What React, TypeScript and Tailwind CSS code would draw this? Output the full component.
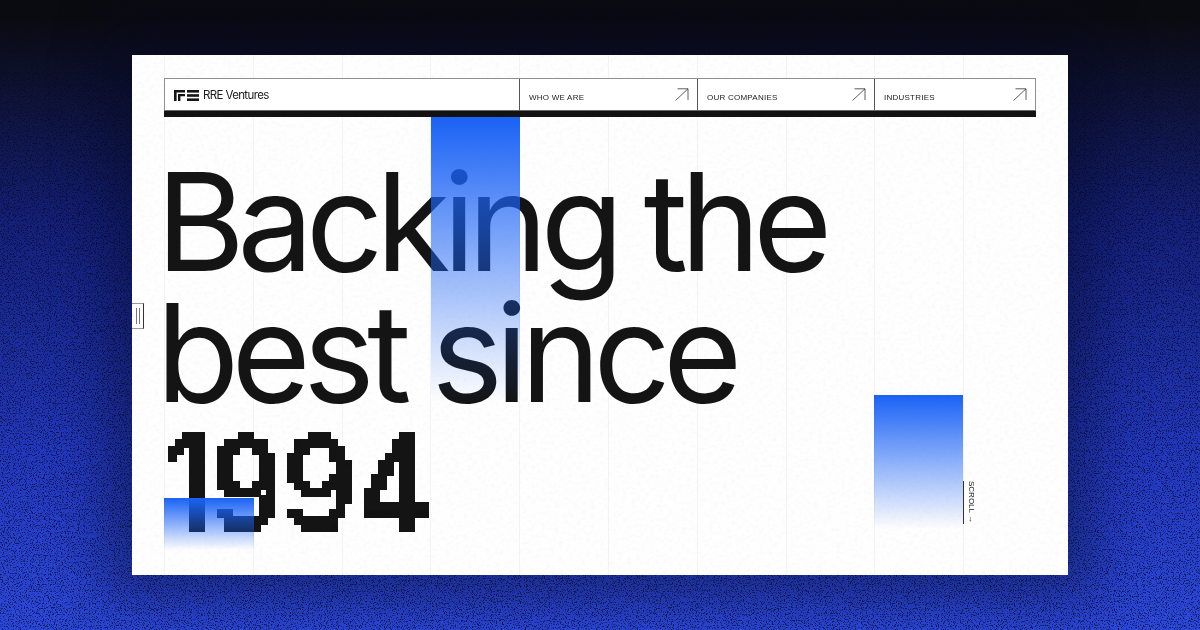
import React from 'react';

const columns = [1, 2, 3, 4, 5, 6, 7, 8, 9, 10];

const navItems = [
  { label: 'WHO WE ARE', width: 'w-[178px]' },
  { label: 'OUR COMPANIES', width: 'w-[177px]' },
  { label: 'INDUSTRIES', width: 'flex-1' },
];

function NavArrow() {
  return (
    <svg width="14" height="13" viewBox="0 0 14 13" fill="none" stroke="#333" strokeWidth="0.8" className="mt-[9px] shrink-0">
      <path d="M0.5 12.5 L13 0.8 M2.5 0.8 H13 V12" />
    </svg>
  );
}

function Logo() {
  return (
    <svg width="25" height="11" viewBox="0 0 25 11" fill="#151515">
      <path d="M0 0H11V2.4H2.6V11H0Z" />
      <path d="M4 4H11V6.2H6.4V11H4Z" />
      <rect x="13" y="0" width="12" height="2.6" />
      <rect x="13" y="4.2" width="12" height="2.6" />
      <rect x="13" y="8.4" width="12" height="2.6" />
    </svg>
  );
}

export default function App() {
  return (
    <div className="relative w-[1200px] h-[630px] overflow-hidden bg-[linear-gradient(180deg,#0b0b0e_3%,#14207a_35%,#2238c0_72%,#2c48dc_100%)] pt-[55px] font-['Inter',sans-serif]">
      {/* grain over the page background */}
      <svg className="absolute inset-0 w-full h-full opacity-70" aria-hidden="true">
        <filter id="grain" x="0" y="0" width="100%" height="100%" colorInterpolationFilters="sRGB">
          <feTurbulence type="fractalNoise" baseFrequency="0.83" numOctaves="2" seed="7" />
          <feColorMatrix values="0 0 0 0 0.03  0 0 0 0 0.04  0 0 0 0 0.14  6 0 0 0 -3.1" />
        </filter>
        <rect width="100%" height="100%" filter="url(#grain)" />
      </svg>

      {/* turns the year into chunky pixels */}
      <svg className="absolute w-0 h-0" aria-hidden="true">
        <filter id="pixelate" x="0" y="0" width="100%" height="100%" colorInterpolationFilters="sRGB">
          <feFlood x="3" y="3" width="1" height="1" floodColor="#000" />
          <feComposite width="7" height="7" />
          <feTile result="dots" />
          <feComposite in="SourceGraphic" in2="dots" operator="in" />
          <feMorphology operator="dilate" radius="3.5" />
          <feComponentTransfer>
            <feFuncA type="discrete" tableValues="0 1 1" />
          </feComponentTransfer>
        </filter>
        <filter id="ghost" x="0" y="0" width="100%" height="100%">
          <feTurbulence type="fractalNoise" baseFrequency="0.22 0.3" numOctaves="2" seed="9" />
          <feColorMatrix values="0 0 0 0 0  0 0 0 0 0  0 0 0 0 0  0.9 0 0 0 -0.38" />
        </filter>
      </svg>

      <div className="relative mx-auto w-[936px] h-[520px] bg-[#fefefe] px-[32px] pt-[23px] shadow-[0_0_50px_25px_rgba(5,8,30,0.4)]">
        {/* faint texture and column guides */}
        <svg className="absolute inset-0 w-full h-full opacity-[0.05]" aria-hidden="true">
          <rect width="100%" height="100%" filter="url(#ghost)" />
        </svg>
        <div className="absolute inset-y-0 left-[32px] flex w-[888px]">
          {columns.map((c) => (
            <div key={c} className="flex-1 border-l border-[#f3f3f3]" />
          ))}
        </div>

        <header className="relative [will-change:transform]">
          <div className="flex h-[33px] bg-white border border-[#8f8f8f] border-b-[#666] text-[#1a1a1a]">
            <div className="w-[354px] flex items-center gap-[4px] pl-[9px] pt-[2px]">
              <Logo />
              <span className="text-[11.5px] tracking-[-0.055em] font-['Inter',sans-serif]">RRE Ventures</span>
            </div>
            {navItems.map((item) => (
              <div key={item.label} className={`flex justify-between ${item.width} border-l border-[#555] pl-[9px] pr-[8px]`}>
                <span className="pt-[14px] text-[8px] leading-[10px] tracking-[0.03em] font-['Liberation_Sans',sans-serif]">{item.label}</span>
                <NavArrow />
              </div>
            ))}
          </div>
          <div className="h-[6px] bg-[#121212]" />
        </header>

        <h1 className="relative mt-[39px] -ml-[8px] text-[136px] leading-[131px] font-normal tracking-[-0.057em] [word-spacing:-3px] text-[#141414] font-['Inter',sans-serif]">
          <span className="block">Backing the</span>
          <span className="block">best since</span>
          <span className="block ml-[6px] mt-[1px] h-[131px] text-[132px] font-medium tracking-[0] [filter:url(#pixelate)]">
            <span className="inline-block origin-left scale-x-[0.875]">1994</span>
          </span>
        </h1>

        {/* blue fades lie over the headline */}
        <div className="absolute left-[299px] top-[62px] w-[89px] h-[285px] bg-gradient-to-b from-[#1a62f5] to-transparent" />
        <div className="absolute left-[742px] top-[340px] w-[89px] h-[134px] bg-gradient-to-b from-[#1a62f5] to-transparent" />
        <div className="absolute left-[32px] top-[443px] w-[90px] h-[52px] bg-gradient-to-b from-[#1a62f5] to-transparent" />

        <div className="absolute left-[831px] top-[426px] h-[43px] border-l border-[#333] pl-[2px] [writing-mode:vertical-rl] text-[8px] leading-[10px] text-[#1a1a1a] font-['Liberation_Sans',sans-serif] [will-change:transform]">
          SCROLL →
        </div>

        <div className="absolute left-0 top-[248px] flex h-[26px] w-[12px] items-stretch justify-center gap-[2px] border-y border-r border-y-[#999] border-r-[#333] py-[4px]">
          <div className="w-px bg-[#777]" />
          <div className="w-px bg-[#777]" />
        </div>
      </div>
    </div>
  );
}
